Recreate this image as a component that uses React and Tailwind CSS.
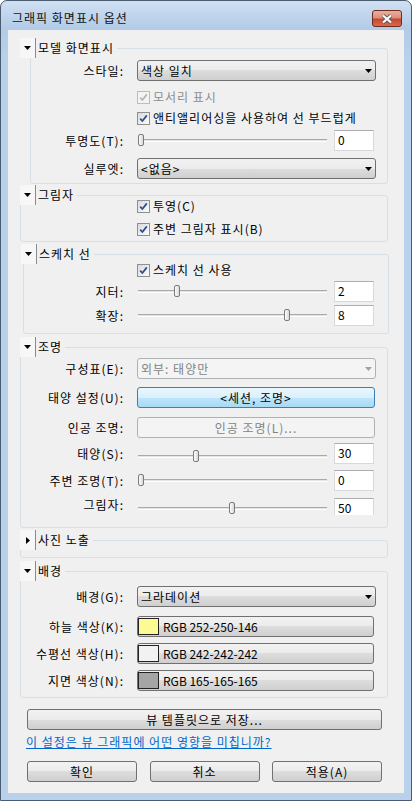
import React from 'react';

const FONT = "font-['Liberation_Sans_Narrow','Noto_Sans_CJK_KR',sans-serif]";
const BTN = 'border border-[#707070] rounded-[3px] bg-[linear-gradient(#f2f2f2,#ebebeb_50%,#dddddd_50%,#cfcfcf)]';

function Tri({ right, color = '#000' }) {
  return right ? (
    <svg width="4" height="7" viewBox="0 0 4 7"><path d="M0 0L4 3.5L0 7Z" fill={color} /></svg>
  ) : (
    <svg width="7" height="4" viewBox="0 0 7 4"><path d="M0 0H7L3.5 4Z" fill={color} /></svg>
  );
}

function Group({ title, collapsed, cls, head, children }) {
  return (
    <div className={`relative shrink-0 border border-[#d5dfe5] rounded-[3px] ${cls}`}>
      <div className={`absolute top-[-11px] ${head} flex items-center h-[20px] bg-[#f0f0f0] pr-[3px]`}>
        <div className="w-[16px] h-[20px] flex items-center justify-center border-r border-[#8a8a8a] bg-[#f7f7f7]">
          <Tri right={collapsed} />
        </div>
        <span className="pl-[2px] whitespace-nowrap">{title}</span>
      </div>
      {children}
    </div>
  );
}

function Row({ lw, label, cls = '', children }) {
  return (
    <div className={`flex items-center h-[21px] ${cls}`}>
      <div className={`${lw} shrink-0 text-right pr-[13px] whitespace-nowrap`}>{label}</div>
      {children}
    </div>
  );
}

function Combo({ value, disabled }) {
  return (
    <div
      className={`w-[239px] h-[21px] rounded-[3px] border flex items-center pl-[3px] pr-[3px] ${
        disabled ? 'border-[#adb2b5] bg-[#f4f4f4] text-[#838383]' : BTN
      }`}
    >
      <span className="flex-1 whitespace-nowrap">{value}</span>
      <Tri color={disabled ? '#a3a3a3' : '#000'} />
    </div>
  );
}

function Check({ disabled }) {
  return (
    <div
      className={`w-[13px] h-[13px] shrink-0 border flex items-center justify-center ${
        disabled ? 'border-[#bcbcbc] bg-[#f4f4f4]' : 'border-[#8e8f8f] bg-[linear-gradient(135deg,#dadada,#fcfcfc)]'
      }`}
    >
      <svg width="9" height="9" viewBox="0 0 9 9">
        <path d="M1.2 4.6L3.4 7L7.8 1.4" stroke={disabled ? '#b4b4b4' : '#2c4b8f'} strokeWidth="1.7" fill="none" />
      </svg>
    </div>
  );
}

function CheckRow({ lw, text, disabled, cls = '' }) {
  return (
    <div className={`flex items-center h-[20px] ${cls}`}>
      <div className={`${lw} shrink-0`} />
      <Check disabled={disabled} />
      <span className={`ml-[3px] whitespace-nowrap ${disabled ? 'text-[#8d8d8d]' : ''}`}>{text}</span>
    </div>
  );
}

function Field({ value, cut }) {
  return (
    <div
      className={`ml-[7px] w-[40px] bg-white border border-[#d6d9dd] border-t-[#abadb3] pl-[3px] leading-[18px] tracking-normal ${
        cut ? 'h-[17px] border-b-0' : 'h-[21px]'
      }`}
    >
      {value}
    </div>
  );
}

function Slider({ value, max, cls = '' }) {
  return (
    <div className={`relative ml-[1px] w-[189px] h-[13px] flex items-center ${cls}`}>
      <div className="w-full h-[3px] border-t border-[#a9a9a9] border-b border-b-white bg-[#e4e4e4]" />
      <div
        className="absolute top-[0px] w-[6px] h-[12px] rounded-[2px] border border-[#7b7b7b] bg-[linear-gradient(90deg,#fdfdfd,#d8d8d8)]"
        style={{ left: Math.round((value / max) * 91 * 2) }}
      />
    </div>
  );
}

const colors = [
  { label: '하늘 색상(K):', rgb: 'RGB 252-250-146', sw: 'bg-[#fcfa92]', cls: 'mt-[9px]' },
  { label: '수평선 색상(H):', rgb: 'RGB 242-242-242', sw: 'bg-[#f2f2f2]', cls: 'mt-[6px]' },
  { label: '지면 색상(N):', rgb: 'RGB 165-165-165', sw: 'bg-[#a5a5a5]', cls: 'mt-[6px]' },
];

export default function App() {
  return (
    <div className={`w-[412px] h-[801px] bg-white text-[12px] leading-[14px] tracking-[1px] text-black ${FONT}`}>
      <div className="h-full rounded-t-[7px] border border-[#4b5b70] bg-[linear-gradient(#cfe0f2,#b2cbe7_28px,#b9d1ea_60px,#b9d1ea)] flex flex-col">
        <div className="h-[29px] shrink-0 flex items-start">
          <span className="mt-[10px] ml-[11px] text-[#111]">그래픽 화면표시 옵션</span>
          <div className="mt-[9px] ml-auto mr-[9px] w-[30px] h-[17px] rounded-[3px] border border-[#6e2a1f] bg-[linear-gradient(#eaae9f,#dc8f7d_45%,#c8472e_55%,#d66b4c)] flex items-center justify-center">
            <svg width="12" height="10" viewBox="0 0 12 10">
              <path d="M2 1.5L10 8.5M10 1.5L2 8.5" stroke="#5b5b5b" strokeWidth="3.8" />
              <path d="M2 1.5L10 8.5M10 1.5L2 8.5" stroke="#fff" strokeWidth="2.2" />
            </svg>
          </div>
        </div>

        <div className="mx-[7px] h-[763px] shrink-0 bg-[#f0f0f0] flex flex-col">
          <Group title="모델 화면표시" cls="mt-[18px] ml-[22px] w-[358px] pt-[11px] pb-[4px]" head="left-[-11px]">
            <Row lw="w-[106px]" label="스타일:">
              <Combo value="색상 일치" />
            </Row>
            <CheckRow lw="w-[106px]" cls="mt-[6px]" disabled text="모서리 표시" />
            <CheckRow lw="w-[106px]" cls="mt-[1px]" text="앤티앨리어싱을 사용하여 선 부드럽게" />
            <Row lw="w-[106px]" label="투명도(T):" cls="mt-[2px]">
              <Slider value={0} max={100} />
              <Field value="0" />
            </Row>
            <Row lw="w-[106px]" label="실루엣:" cls="mt-[7px]">
              <Combo value="<없음>" />
            </Row>
          </Group>

          <Group title="그림자" cls="mt-[11px] ml-[12px] w-[368px] pb-[2px]" head="left-[-1px]">
            <CheckRow lw="w-[116px]" text="투영(C)" />
            <CheckRow lw="w-[116px]" cls="mt-[3px]" text="주변 그림자 표시(B)" />
          </Group>

          <Group title="스케치 선" cls="mt-[12px] ml-[15px] w-[366px] pt-[5px] pb-[7px]" head="left-[-3px]">
            <CheckRow lw="w-[113px]" text="스케치 선 사용" />
            <Row lw="w-[113px]" label="지터:" cls="mt-[1px]">
              <Slider value={2} max={10} />
              <Field value="2" />
            </Row>
            <Row lw="w-[113px]" label="확장:" cls="mt-[3px]">
              <Slider value={8} max={10} />
              <Field value="8" />
            </Row>
          </Group>

          <Group title="조명" cls="mt-[13px] ml-[12px] w-[368px] pt-[10px] pb-[8px]" head="left-[-1px]">
            <Row lw="w-[116px]" label="구성표(E):">
              <Combo value="외부: 태양만" disabled />
            </Row>
            <Row lw="w-[116px]" label="태양 설정(U):" cls="mt-[8px]">
              <div className="w-[238px] h-[21px] rounded-[3px] border border-[#3c7fb1] bg-[linear-gradient(#eaf6fd,#d9f0fc_50%,#bee6fd_50%,#a7d9f5)] flex items-center justify-center">
                &lt;세션, 조명&gt;
              </div>
            </Row>
            <Row lw="w-[116px]" label="인공 조명:" cls="mt-[9px]">
              <div className="w-[238px] h-[21px] rounded-[3px] border border-[#adb2b5] bg-[#f4f4f4] text-[#838383] flex items-center justify-center">
                인공 조명(L)...
              </div>
            </Row>
            <Row lw="w-[116px]" label="태양(S):" cls="mt-[5px]">
              <Slider value={30} max={100} cls="mt-[6px]" />
              <Field value="30" />
            </Row>
            <Row lw="w-[116px]" label="주변 조명(T):" cls="mt-[6px]">
              <Slider value={0} max={100} />
              <Field value="0" />
            </Row>
            <Row lw="w-[116px]" label="그림자:" cls="mt-[7px] !items-start">
              <Slider value={50} max={100} cls="mt-[4px]" />
              <Field value="50" cut />
            </Row>
          </Group>

          <Group title="사진 노출" collapsed cls="mt-[12px] ml-[12px] w-[368px] h-[18px]" head="left-[-1px]" />

          <Group title="배경" cls="mt-[13px] ml-[12px] w-[368px] pt-[14px] pb-[6px]" head="left-[-1px]">
            <Row lw="w-[116px]" label="배경(G):">
              <Combo value="그라데이션" />
            </Row>
            {colors.map((c) => (
              <Row key={c.label} lw="w-[116px]" label={c.label} cls={c.cls}>
                <div className={`w-[237px] h-[21px] flex items-center ${BTN}`}>
                  <div className={`w-[21px] h-[17px] border border-[#222] ${c.sw}`} />
                  <span className="ml-[4px] tracking-normal">{c.rgb}</span>
                </div>
              </Row>
            ))}
          </Group>

          <div className="ml-[19px] w-[355px] flex flex-col">
            <div className={`mt-[11px] h-[21px] flex items-center justify-center ${BTN}`}>뷰 템플릿으로 저장...</div>
            <div className="mt-[5px] ml-[-1px] h-[16px] text-[#0066cc] underline whitespace-nowrap">
              이 설정은 뷰 그래픽에 어떤 영향을 미칩니까?
            </div>
            <div className="mt-[10px] flex justify-between">
              {['확인', '취소', '적용(A)'].map((t) => (
                <div key={t} className={`w-[110px] h-[21px] flex items-center justify-center ${BTN}`}>
                  {t}
                </div>
              ))}
            </div>
          </div>
        </div>
      </div>
    </div>
  );
}
